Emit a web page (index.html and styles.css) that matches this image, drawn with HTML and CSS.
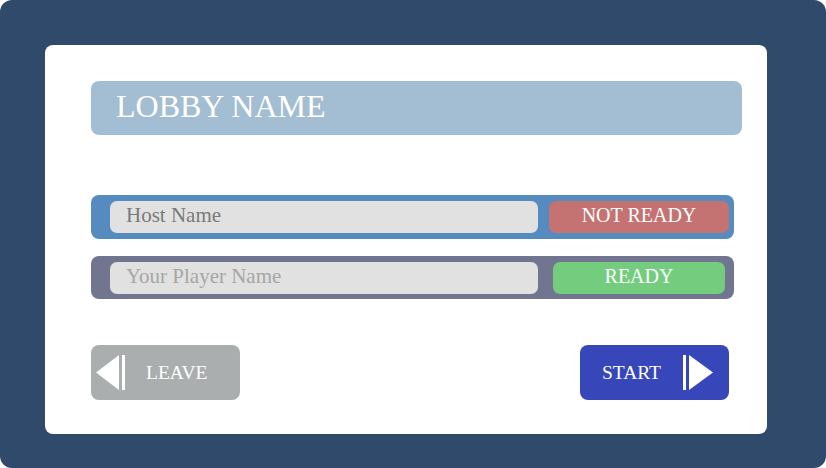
FILE: index.html
```html
<!DOCTYPE html>
<html>
<head>
<meta charset="utf-8">
<link rel="stylesheet" href="styles.css">
</head>
<body>
<div class="frame">
  <div class="card">
    <div class="lobby-name">LOBBY NAME</div>
    <div class="players">
      <div class="row row-host">
        <div class="name-field host-name">Host Name</div>
        <div class="status status-not">NOT READY</div>
      </div>
      <div class="row row-you">
        <div class="name-field you-name">Your Player Name</div>
        <div class="status status-ready">READY</div>
      </div>
    </div>
    <div class="actions">
      <div class="btn btn-leave">
        <svg class="icon" width="30" height="35" viewBox="0 0 30 35">
          <polygon points="23,0 23,35 0,17.5" fill="#fff"/>
          <rect x="26" y="0" width="3" height="35" fill="#fff"/>
        </svg>
        <span class="btn-text">LEAVE</span>
      </div>
      <div class="btn btn-start">
        <span class="btn-text">START</span>
        <svg class="icon" width="30" height="35" viewBox="0 0 30 35">
          <rect x="0" y="0" width="3" height="35" fill="#fff"/>
          <polygon points="6,0 6,35 30,17.5" fill="#fff"/>
        </svg>
      </div>
    </div>
  </div>
</div>
</body>
</html>
```
FILE: styles.css
```css
* { box-sizing: border-box; }
html, body { margin: 0; padding: 0; background: #ffffff; }
body { font-family: "Liberation Serif", "Times New Roman", serif; }

.frame {
  width: 826px;
  height: 468px;
  background: #2f4a6a;
  border-radius: 12px;
  padding: 45px 59px 34px 45px;
}

.card {
  background: #ffffff;
  border-radius: 8px;
  height: 389px;
  padding: 36px 25px 0 46px;
  display: flex;
  flex-direction: column;
}

.lobby-name {
  height: 54px;
  background: #a3bed2;
  border-radius: 8px;
  color: #ffffff;
  font-size: 32px;
  line-height: 50px;
  padding-left: 25px;
}

.players {
  margin-top: 60px;
  margin-right: 8px;
  display: flex;
  flex-direction: column;
  gap: 17px;
}

.row {
  height: 44px;
  border-radius: 8px;
  display: flex;
  align-items: center;
  padding: 0 5px 0 19px;
}
.row-host { background: #558bbf; }
.row-you { background: #717590; height: 43px; padding-right: 9px; }

.name-field {
  width: 428px;
  height: 32px;
  background: #e1e1e1;
  border-radius: 7px;
  font-size: 21px;
  line-height: 29px;
  padding-left: 16px;
}
.host-name { color: #7a7a7a; }
.you-name { color: #a6a6a6; }

.status {
  height: 32px;
  border-radius: 7px;
  color: #ffffff;
  font-size: 20px;
  line-height: 29px;
  text-align: center;
  flex: 1;
}
.status-not { background: #c57272; margin-left: 11px; }
.status-ready { background: #74cd7f; margin-left: 15px; }

.actions {
  margin-top: 46px;
  margin-right: 13px;
  display: flex;
  justify-content: space-between;
}

.btn {
  width: 149px;
  height: 55px;
  border-radius: 8px;
  display: flex;
  align-items: center;
  color: #ffffff;
  font-size: 19.5px;
}
.btn-leave { background: #abaeae; padding-left: 5px; }
.btn-leave .btn-text { margin-left: 20px; }
.btn-start { background: #3746b8; padding-left: 22px; }
.btn-start .btn-text { margin-right: 22px; }
.icon { display: block; flex: none; }
```
